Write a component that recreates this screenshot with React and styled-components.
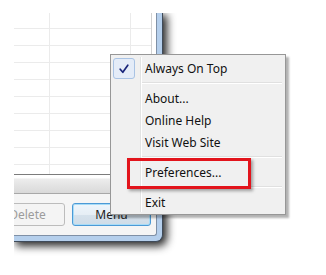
import React from 'react';
import styled, { createGlobalStyle } from 'styled-components';

const GlobalStyle = createGlobalStyle`
  html, body {
    margin: 0;
    padding: 0;
    background: #ffffff;
  }
  body {
    font-family: "Noto Sans", "DejaVu Sans", sans-serif;
  }
`;

const Stage = styled.div`
  position: relative;
  width: 326px;
  height: 275px;
  overflow: hidden;
  background: #ffffff;
`;

const Clip = styled.div`
  margin: 13px 0 0 14px;
  width: 312px;
  height: 262px;
  overflow: hidden;
`;

const Window = styled.div`
  display: flex;
  width: 149px;
  height: 229px;
  box-sizing: border-box;
  padding: 0 5px 5px 0;
  background: #b5cfec;
  border-right: 1px solid #3f4b5a;
  border-bottom: 1px solid #3f4b5a;
  border-bottom-right-radius: 7px;
  box-shadow: 3px 3px 9px 1px rgba(0, 0, 0, 0.85);
`;

const Client = styled.div`
  flex: 1;
  display: flex;
  flex-direction: column;
  background: #f5f5f5;
  border-right: 1px solid #7f90a6;
  border-bottom: 1px solid #7f90a6;
  border-bottom-right-radius: 3px;
  overflow: hidden;
`;

const ListArea = styled.div`
  display: flex;
  height: 161px;
  padding-right: 4px;
  background: #ffffff;
  border-bottom: 1px solid #7c7c7c;
`;

const List = styled.div`
  flex: 1;
  overflow: hidden;
  border-right: 1px solid #d2d2d2;
`;

const Row = styled.div`
  display: flex;
  height: ${(p) => p.$h}px;
  flex-shrink: 0;
  border-bottom: 1px solid #ebebeb;
`;

const Cell = styled.div`
  width: ${(p) => (p.$w ? `${p.$w}px` : 'auto')};
  flex: ${(p) => (p.$w ? '0 0 auto' : '1')};
  border-right: ${(p) => (p.$w ? '1px solid #ebebeb' : 'none')};
`;

const Strip = styled.div`
  height: 18px;
  border-bottom: 1px solid #a8a8a8;
  background: linear-gradient(#ffffff 0, #ffffff 16%, #ededed 22%, #e4e4e4 55%, #d9d9d9 100%);
`;

const ButtonBar = styled.div`
  flex: 1;
  display: flex;
  justify-content: flex-end;
  align-items: flex-start;
  gap: 7px;
  padding: 9px 5px 0 0;
`;

const Button = styled.div`
  flex: 0 0 auto;
  width: ${(p) => p.$w}px;
  height: 23px;
  box-sizing: border-box;
  display: flex;
  align-items: center;
  justify-content: center;
  border-radius: 3px;
  font-size: 12px;
  border: 1px solid ${(p) => (p.$disabled ? '#bcbcbc' : '#4c9ad6')};
  color: ${(p) => (p.$disabled ? '#9c9c9c' : '#1e1e1e')};
  background: ${(p) =>
    p.$disabled
      ? '#f4f4f4'
      : 'linear-gradient(#eef6fc 0, #e6eef5 50%, #d6e2ec 51%, #cfdce7 100%)'};
  box-shadow: ${(p) => (p.$disabled ? 'none' : 'inset 0 0 0 1px #a8dcf7')};
`;

const Popup = styled.div`
  position: absolute;
  left: 110px;
  top: 54px;
  width: 176px;
  height: 161px;
  box-sizing: border-box;
  padding: 2px 2px 1px 2px;
  background: #f0f0f0;
  border: 1px solid #979797;
  box-shadow: 3px 3px 2px rgba(0, 0, 0, 0.3);
  font-size: 12px;
  color: #111111;

  &::before {
    content: '';
    position: absolute;
    left: 29px;
    top: 2px;
    bottom: 2px;
    width: 1px;
    background: #e2e3e3;
    border-right: 1px solid #ffffff;
  }
`;

const Item = styled.div`
  position: relative;
  display: flex;
  align-items: center;
  height: 22px;
`;

const IconSlot = styled.div`
  width: 22px;
  height: 21px;
  margin: 1px 10px 0 0;
  box-sizing: border-box;
  display: flex;
  align-items: center;
  justify-content: center;
  border-radius: 3px;
  border: 1px solid ${(p) => (p.$checked ? '#a9c3e4' : 'transparent')};
  background: ${(p) => (p.$checked ? '#e4ecf8' : 'transparent')};
`;

const Separator = styled.div`
  display: flex;
  align-items: center;
  height: 8px;
  padding: 0 1px 0 29px;

  &::after {
    content: '';
    flex: 1;
    height: 1px;
    background: #e0e0e0;
    border-bottom: 1px solid #ffffff;
  }
`;

const Highlight = styled.div`
  position: absolute;
  left: 127px;
  top: 158px;
  width: 124px;
  height: 31px;
  box-sizing: border-box;
  border: 3px solid #e2141c;
  box-shadow: 2px 2px 3px rgba(0, 0, 0, 0.35);
`;

const rowHeights = [15, 16, 16, 16, 16, 16, 16, 16, 16, 16];

const menu = [
  { label: 'Always On Top', checked: true },
  { sep: true },
  { label: 'About...' },
  { label: 'Online Help' },
  { label: 'Visit Web Site' },
  { sep: true },
  { label: 'Preferences...' },
  { sep: true },
  { label: 'Exit' },
];

function Check() {
  return (
    <svg width="10" height="10" viewBox="0 0 10 10">
      <path d="M1.2 5.2 L3.8 8.3 L8.8 1.2" fill="none" stroke="#18247a" strokeWidth="1.7" strokeLinecap="round" strokeLinejoin="round" />
    </svg>
  );
}

export default function App() {
  return (
    <Stage>
      <GlobalStyle />
      <Clip>
        <Window>
          <Client>
            <ListArea>
              <List>
                {rowHeights.map((h, i) => (
                  <Row key={i} $h={h}>
                    <Cell $w={35} />
                    <Cell $w={80} />
                    <Cell />
                  </Row>
                ))}
              </List>
            </ListArea>
            <Strip />
            <ButtonBar>
              <Button $w={75} $disabled>Delete</Button>
              <Button $w={79}>Menu</Button>
            </ButtonBar>
          </Client>
        </Window>
      </Clip>
      <Popup>
        {menu.map((m, i) =>
          m.sep ? (
            <Separator key={i} />
          ) : (
            <Item key={i}>
              <IconSlot $checked={m.checked}>{m.checked && <Check />}</IconSlot>
              {m.label}
            </Item>
          )
        )}
      </Popup>
      <Highlight />
    </Stage>
  );
}
